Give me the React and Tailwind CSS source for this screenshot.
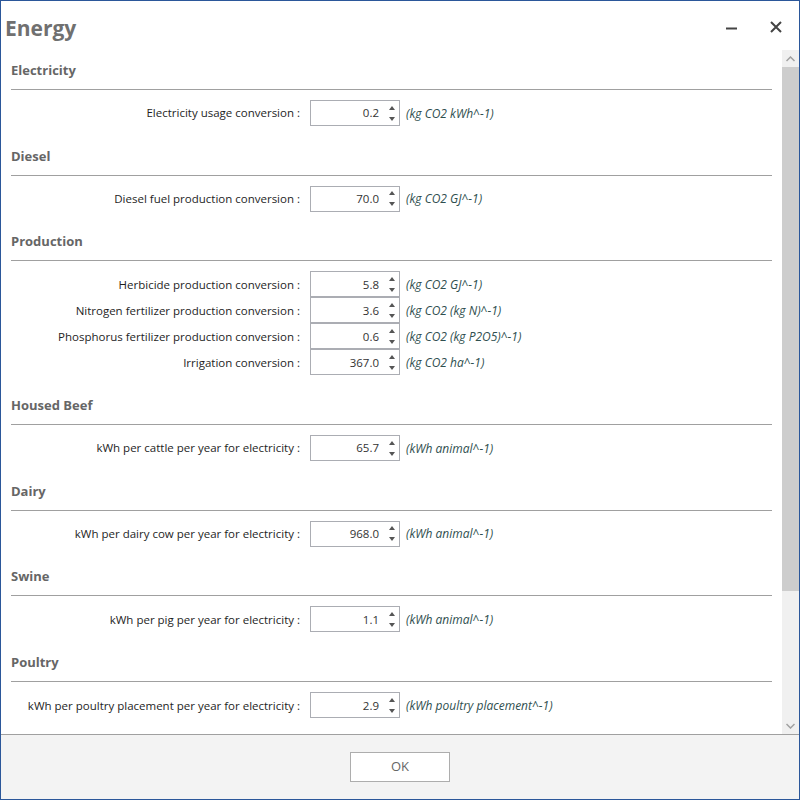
import React from 'react';

const sections = [
  { title: 'Electricity', rows: [{ label: 'Electricity usage conversion :', value: '0.2', unit: '(kg CO2 kWh^-1)' }] },
  { title: 'Diesel', rows: [{ label: 'Diesel fuel production conversion :', value: '70.0', unit: '(kg CO2 GJ^-1)' }] },
  {
    title: 'Production',
    rows: [
      { label: 'Herbicide production conversion :', value: '5.8', unit: '(kg CO2 GJ^-1)' },
      { label: 'Nitrogen fertilizer production conversion :', value: '3.6', unit: '(kg CO2 (kg N)^-1)' },
      { label: 'Phosphorus fertilizer production conversion :', value: '0.6', unit: '(kg CO2 (kg P2O5)^-1)' },
      { label: 'Irrigation conversion :', value: '367.0', unit: '(kg CO2 ha^-1)' },
    ],
  },
  { title: 'Housed Beef', rows: [{ label: 'kWh per cattle per year for electricity :', value: '65.7', unit: '(kWh animal^-1)' }] },
  { title: 'Dairy', rows: [{ label: 'kWh per dairy cow per year for electricity :', value: '968.0', unit: '(kWh animal^-1)' }] },
  { title: 'Swine', rows: [{ label: 'kWh per pig per year for electricity :', value: '1.1', unit: '(kWh animal^-1)' }] },
  { title: 'Poultry', rows: [{ label: 'kWh per poultry placement per year for electricity :', value: '2.9', unit: '(kWh poultry placement^-1)' }] },
];

const Spinner = ({ value }) => (
  <div className="flex h-[26px] w-[90px] shrink-0 items-center border border-[#abadb3] bg-white">
    <span className="flex-1 pr-[6px] text-right text-[11.5px] text-[#333]">{value}</span>
    <div className="flex w-[14px] flex-col items-center gap-[7px]">
      <svg width="6" height="4" viewBox="0 0 6 4"><path d="M3 0L6 4H0z" fill="#555" /></svg>
      <svg width="6" height="4" viewBox="0 0 6 4"><path d="M0 0h6L3 4z" fill="#555" /></svg>
    </div>
  </div>
);

const Section = ({ title, rows }) => (
  <div className="pb-[19.7px]">
    <div className="h-[20px] text-[13px] font-bold leading-[20px] text-[#666]">{title}</div>
    <div className="mt-[9px] h-px bg-[#a0a0a0]" />
    <div className="mt-[10px] flex flex-col">
      {rows.map((r) => (
        <div key={r.label} className="flex h-[26px] items-center">
          <div className="w-[299px] shrink-0 whitespace-nowrap pr-[10px] text-right text-[11.5px] text-[#1e1e1e]">{r.label}</div>
          <Spinner value={r.value} />
          <div className="whitespace-nowrap pl-[6px] pt-[1px] text-[12px] italic text-[#2f4f4f]">{r.unit}</div>
        </div>
      ))}
    </div>
  </div>
);

export default function App() {
  return (
    <div
      className="flex h-[800px] w-[800px] flex-col border border-[#2b579a] bg-white"
      style={{ fontFamily: '"Open Sans", sans-serif' }}
    >
      <div className="flex h-[49px] shrink-0 items-center justify-between pl-[4px] pr-[16px]">
        <div className="mt-[6px] text-[21px] font-bold text-[#707070]">Energy</div>
        <div className="mt-[2px] flex items-center gap-[30px]">
          <svg width="14" height="14" viewBox="0 0 14 14"><path d="M1 8.5h11" stroke="#444" strokeWidth="2" /></svg>
          <svg width="14" height="14" viewBox="0 0 14 14"><path d="M2 2l10 10M12 2L2 12" stroke="#444" strokeWidth="2" /></svg>
        </div>
      </div>
      <div className="flex min-h-0 flex-1">
        <div className="flex-1 overflow-hidden pl-[10px] pr-[10px] pt-[10px]">
          {sections.map((s) => (
            <Section key={s.title} {...s} />
          ))}
        </div>
        <div className="flex w-[17px] shrink-0 flex-col bg-[#f0f0f0]">
          <div className="flex h-[17px] items-center justify-center">
            <svg width="9" height="6" viewBox="0 0 9 6"><path d="M0.5 5L4.5 1L8.5 5" stroke="#a0a0a0" strokeWidth="1.5" fill="none" /></svg>
          </div>
          <div className="h-[524px] bg-[#cdcdcd]" />
          <div className="flex-1" />
          <div className="flex h-[17px] items-center justify-center">
            <svg width="9" height="6" viewBox="0 0 9 6"><path d="M0.5 1L4.5 5L8.5 1" stroke="#a0a0a0" strokeWidth="1.5" fill="none" /></svg>
          </div>
        </div>
      </div>
      <div className="flex h-[65px] shrink-0 items-center justify-center border-t border-[#a0a0a0] bg-[#f3f3f3]">
        <button className="h-[30px] w-[100px] border border-[#adadad] bg-white text-[13px] text-[#666]">OK</button>
      </div>
    </div>
  );
}
